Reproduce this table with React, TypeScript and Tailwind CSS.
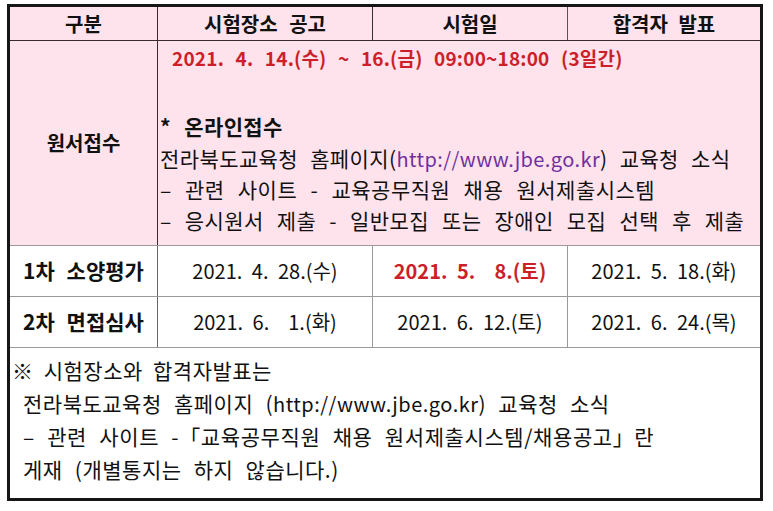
export default function App() {
  const font = { fontFamily: '"Noto Sans CJK KR", "Noto Sans", sans-serif' };
  return (
    <div className="w-[773px] h-[511px] bg-white pl-[7px] pt-[4px] text-[#111]" style={font}>
      <div className="w-[756px] h-[497px] border-[3px] border-[#161616] flex flex-col">
        {/* header */}
        <div className="h-[34px] grid grid-cols-[148px_215px_195px_1fr] bg-[#ffe3ec] border-b border-[#3a2a2e] text-[20px] font-bold">
          <div className="flex items-center justify-center border-r border-[#3a2a2e]">구분</div>
          <div className="flex items-center justify-center border-r border-[#3a2a2e] [word-spacing:7px]">시험장소 공고</div>
          <div className="flex items-center justify-center border-r border-[#555]">시험일</div>
          <div className="flex items-center justify-center [word-spacing:6px]">합격자 발표</div>
        </div>

        {/* 원서접수 */}
        <div className="h-[205px] grid grid-cols-[148px_1fr] bg-[#ffe3ec] border-b border-[#999]">
          <div className="flex items-center justify-center border-r border-[#3a2a2e] text-[20px] font-bold">원서접수</div>
          <div className="pl-[2px] pt-[1px] text-[21px] leading-[32px] tracking-[0.4px] [word-spacing:8px]">
            <div className="pl-[12px] font-bold text-[#cc1f2a] text-[19px] tracking-[0.2px] [word-spacing:7px]">
              2021. 4. 14.(수) ~ 16.(금) 09:00~18:00 (3일간)
            </div>
            <div className="h-[36px]" />
            <div className="font-bold leading-[33px]">* 온라인접수</div>
            <div className="leading-[31px] [word-spacing:7px]">
              전라북도교육청 홈페이지(<span className="text-[#7030a0] text-[20px]">http://www.jbe.go.kr</span>) 교육청 소식
            </div>
            <div className="leading-[31px] tracking-[0.5px]">– 관련 사이트 - 교육공무직원 채용 원서제출시스템</div>
            <div className="leading-[31px]">– 응시원서 제출 - 일반모집 또는 장애인 모집 선택 후 제출</div>
          </div>
        </div>

        {/* 1차 */}
        <div className="h-[51px] grid grid-cols-[148px_215px_195px_1fr] border-b border-[#999] text-[20px] [word-spacing:5px]">
          <div className="flex items-center justify-center border-r border-[#666] font-bold text-[21px] [word-spacing:7px]">1차 소양평가</div>
          <div className="flex items-center justify-center border-r border-[#999]">2021. 4. 28.(수)</div>
          <div className="flex items-center justify-center border-r border-[#999] font-bold text-[#cc1f2a]">2021. 5. &nbsp;8.(토)</div>
          <div className="flex items-center justify-center">2021. 5. 18.(화)</div>
        </div>

        {/* 2차 */}
        <div className="h-[51px] grid grid-cols-[148px_215px_195px_1fr] border-b border-[#999] text-[20px] [word-spacing:5px]">
          <div className="flex items-center justify-center border-r border-[#666] font-bold text-[21px] [word-spacing:7px]">2차 면접심사</div>
          <div className="flex items-center justify-center border-r border-[#999]">2021. 6. &nbsp;1.(화)</div>
          <div className="flex items-center justify-center border-r border-[#999]">2021. 6. 12.(토)</div>
          <div className="flex items-center justify-center">2021. 6. 24.(목)</div>
        </div>

        {/* notes */}
        <div className="flex-1 pl-[2px] pt-[6px] text-[21px] leading-[33px] tracking-[0.5px] [word-spacing:7px]">
          <div className="[word-spacing:5px]">※ 시험장소와 합격자발표는</div>
          <div className="pl-[11px]">전라북도교육청 홈페이지 (<span className="text-[20px]">http://www.jbe.go.kr</span>) 교육청 소식</div>
          <div className="pl-[11px] tracking-[0.6px]">– 관련 사이트 -「교육공무직원 채용 원서제출시스템/채용공고」란</div>
          <div className="pl-[11px]">게재 (개별통지는 하지 않습니다.)</div>
        </div>
      </div>
    </div>
  );
}
